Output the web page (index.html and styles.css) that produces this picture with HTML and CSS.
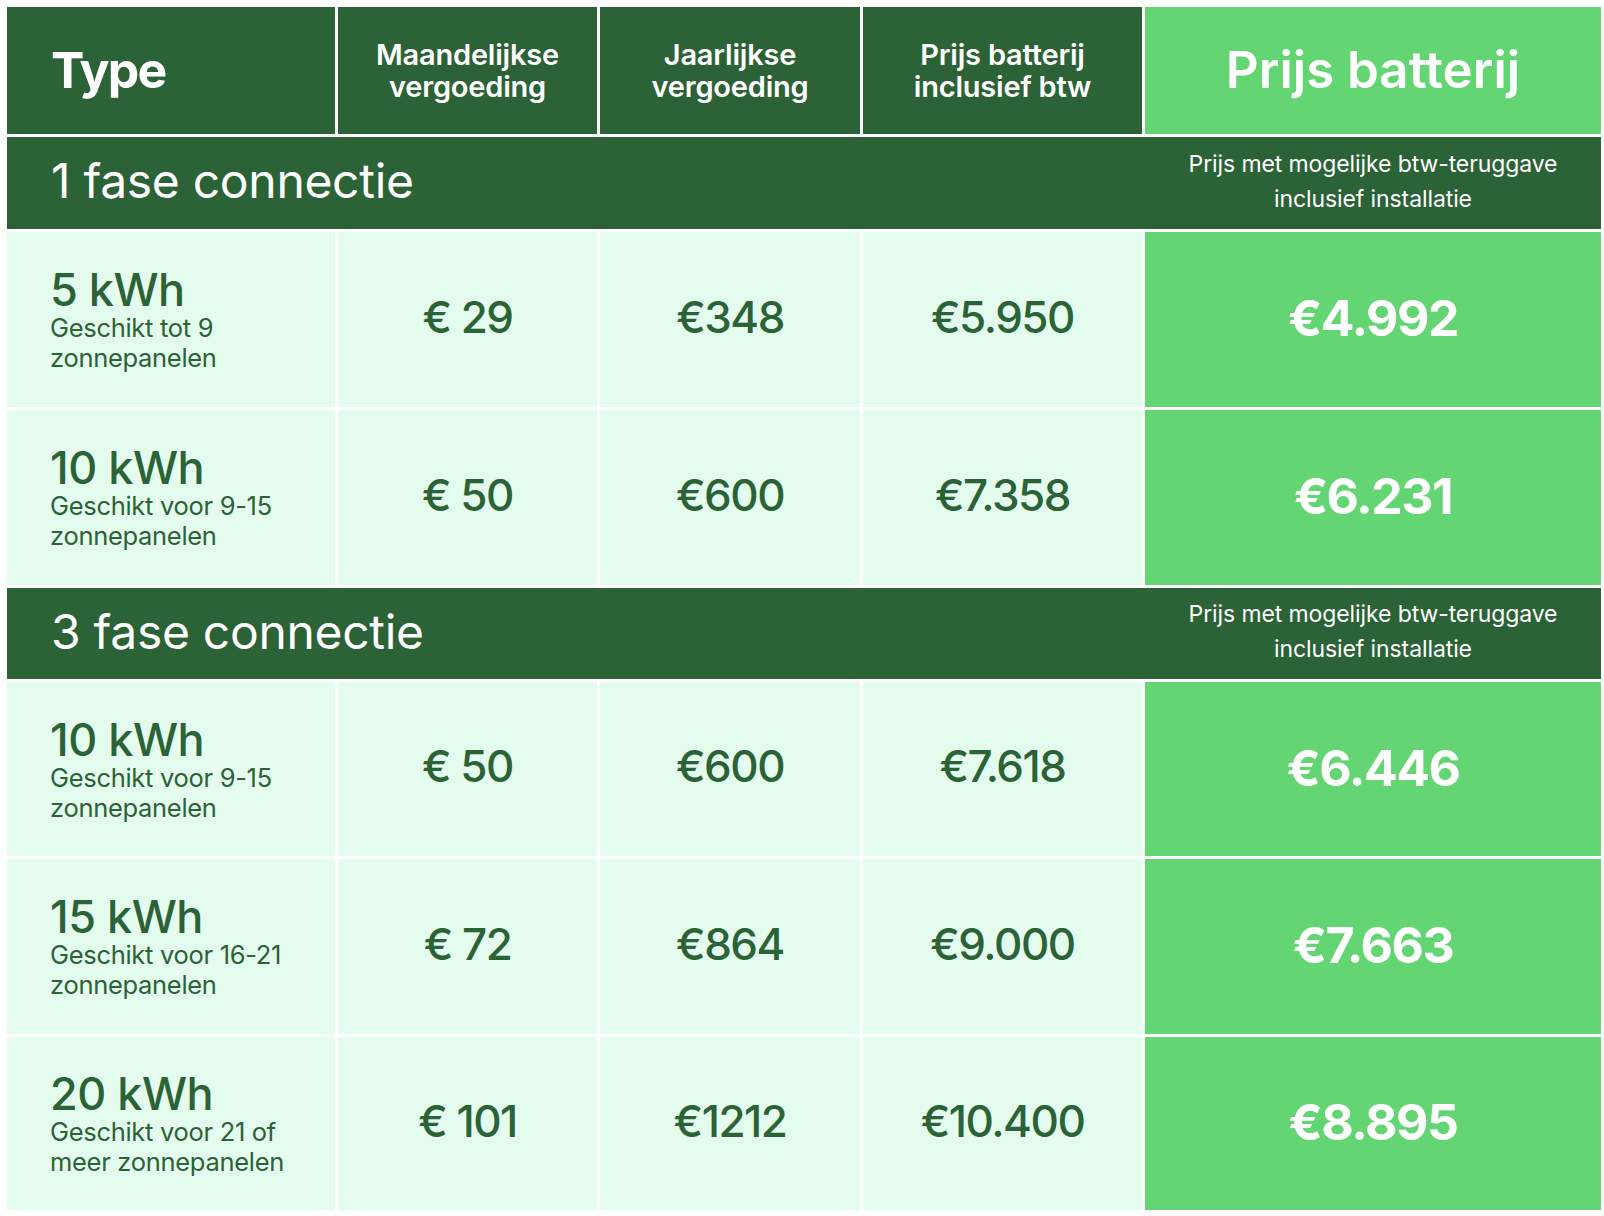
FILE: index.html
```html
<!DOCTYPE html>
<html lang="nl">
<head>
<meta charset="utf-8">
<title>Prijzen thuisbatterij</title>
<link rel="stylesheet" href="styles.css">
</head>
<body>
<div class="table">
  <div class="cell head type-head">Type</div>
  <div class="cell head col-head">Maandelijkse<br>vergoeding</div>
  <div class="cell head col-head">Jaarlijkse<br>vergoeding</div>
  <div class="cell head col-head">Prijs batterij<br>inclusief btw</div>
  <div class="cell head price-head">Prijs batterij</div>

  <div class="section">
    <div class="section-title">1 fase connectie</div>
    <div class="section-note">Prijs met mogelijke btw-teruggave<br>inclusief installatie</div>
  </div>

  <div class="cell type"><span class="kwh">5 kWh</span><span class="fit">Geschikt tot 9<br>zonnepanelen</span></div>
  <div class="cell val">€ 29</div>
  <div class="cell val">€348</div>
  <div class="cell val">€5.950</div>
  <div class="cell price">€4.992</div>

  <div class="cell type"><span class="kwh">10 kWh</span><span class="fit">Geschikt voor 9-15<br>zonnepanelen</span></div>
  <div class="cell val">€ 50</div>
  <div class="cell val">€600</div>
  <div class="cell val">€7.358</div>
  <div class="cell price">€6.231</div>

  <div class="section">
    <div class="section-title">3 fase connectie</div>
    <div class="section-note">Prijs met mogelijke btw-teruggave<br>inclusief installatie</div>
  </div>

  <div class="cell type"><span class="kwh">10 kWh</span><span class="fit">Geschikt voor 9-15<br>zonnepanelen</span></div>
  <div class="cell val">€ 50</div>
  <div class="cell val">€600</div>
  <div class="cell val">€7.618</div>
  <div class="cell price">€6.446</div>

  <div class="cell type"><span class="kwh">15 kWh</span><span class="fit">Geschikt voor 16-21<br>zonnepanelen</span></div>
  <div class="cell val">€ 72</div>
  <div class="cell val">€864</div>
  <div class="cell val">€9.000</div>
  <div class="cell price">€7.663</div>

  <div class="cell type"><span class="kwh">20 kWh</span><span class="fit">Geschikt voor 21 of<br>meer zonnepanelen</span></div>
  <div class="cell val">€ 101</div>
  <div class="cell val">€1212</div>
  <div class="cell val">€10.400</div>
  <div class="cell price">€8.895</div>
</div>
</body>
</html>
```

FILE: styles.css
```css
html, body {
  margin: 0;
  padding: 0;
  background: #ffffff;
}

body {
  font-family: "Inter", "Noto Sans", sans-serif;
  padding: 7px 3px 7px 7px;
}

.table {
  display: grid;
  grid-template-columns: 328px 259px 260px 279px 456px;
  grid-template-rows: 127px 92px 175px 175px 91px 174px 175px 173px;
  gap: 3px;
  width: 1594px;
}

.cell {
  display: flex;
  align-items: center;
  justify-content: center;
  text-align: center;
}

.head {
  background: #2b6236;
  color: #ffffff;
}

.type-head {
  justify-content: flex-start;
  padding-left: 44px;
  padding-bottom: 2px;
  font-size: 50px;
  font-weight: 700;
  letter-spacing: -1.8px;
}

.col-head {
  font-size: 29px;
  font-weight: 600;
  line-height: 32px;
  letter-spacing: -0.2px;
}

.price-head {
  background: #64d573;
  font-size: 51px;
  font-weight: 600;
  padding-bottom: 2px;
}

.section {
  grid-column: 1 / -1;
  display: grid;
  grid-template-columns: 1fr 456px;
  background: #2b6236;
  color: #ffffff;
}

.section-title {
  display: flex;
  align-items: center;
  padding-left: 44px;
  padding-bottom: 5px;
  font-size: 48px;
  font-weight: 400;
  letter-spacing: -0.3px;
}

.section-note {
  display: flex;
  align-items: center;
  justify-content: center;
  text-align: center;
  font-size: 23px;
  line-height: 35px;
  font-weight: 400;
  padding-bottom: 3px;
  letter-spacing: -0.1px;
}

.type {
  background: #e3fcee;
  color: #2b6236;
  flex-direction: column;
  align-items: flex-start;
  justify-content: center;
  text-align: left;
  padding-left: 43px;
}

.kwh {
  font-size: 45px;
  font-weight: 500;
  line-height: 47px;
  letter-spacing: -0.5px;
}

.fit {
  font-size: 25.5px;
  line-height: 30px;
  font-weight: 400;
  letter-spacing: -0.3px;
}

.val {
  background: #e3fcee;
  color: #2b6236;
  font-size: 44px;
  font-weight: 500;
  letter-spacing: -1.5px;
  padding-bottom: 6px;
}

.price {
  background: #64d573;
  color: #ffffff;
  font-size: 50px;
  font-weight: 700;
  letter-spacing: -1.5px;
  padding-bottom: 3px;
}
```
